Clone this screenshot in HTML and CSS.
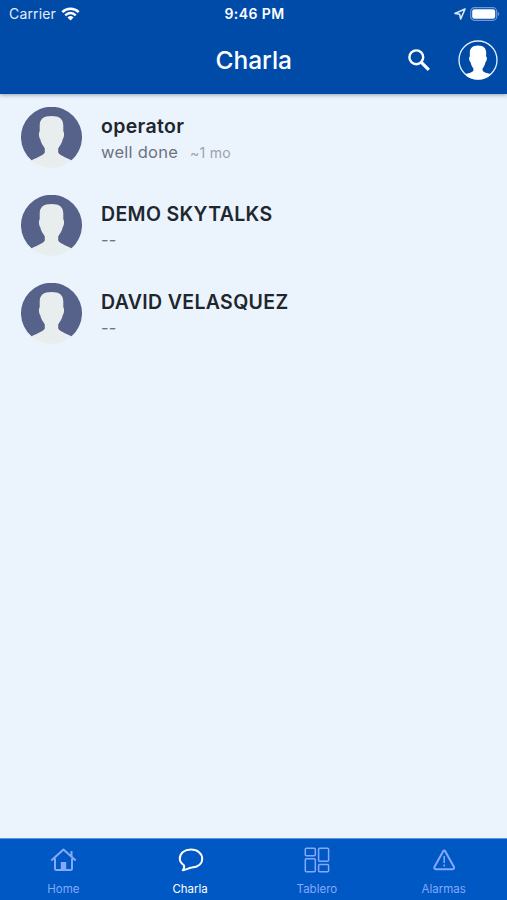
FILE: index.html
```html
<!DOCTYPE html>
<html lang="es">
<head>
    <meta charset="UTF-8" />
    <meta name="viewport" content="width=device-width, initial-scale=1.0" />
    <title>Charla</title>
    <link rel="stylesheet" href="styles.css">
</head>
<body>
<!-- Shared avatar -->
<svg class="symbols" aria-hidden="true">
    <symbol id="avatar" viewBox="0 0 61 61">
        <path class="avatar-bg" d="M10.5 53.3A30.5 30.5 0 1 1 50.5 53.3Z" />
        <path class="avatar-person" d="M30.5 9C38.5 9 42.3 12 42.3 18.5V24.5C43.5 25 43.2 30.5 41.8 32C41 36.5 38.5 39 37.2 41.5V45.5C39 48.5 43 49.5 50.5 53.3A30.5 30.5 0 0 1 10.5 53.3C18 49.5 22 48.5 23.8 45.5V41.5C22.5 39 20 36.5 19.2 32C17.8 30.5 17.5 25 18.7 24.5V18.5C18.7 12 22.5 9 30.5 9Z" />
    </symbol>
</svg>

<header>
    <div class="status-bar">
        <div class="carrier">
            <span>Carrier</span>
            <svg width="19" height="14" viewBox="0 0 19 14" fill="none" stroke="#fff" stroke-width="2.5">
                <path d="M1.3 5.2a11.6 11.6 0 0 1 16.4 0M4.3 8.3a7.3 7.3 0 0 1 10.4 0" />
                <path d="M9.5 13.5l-3-3.1a4.3 4.3 0 0 1 6 0z" fill="#fff" stroke="none" />
            </svg>
        </div>
        <time>9:46 PM</time>
        <div class="indicators">
            <svg width="12" height="12" viewBox="0 0 12 12" fill="none" stroke="#dbe8fa" stroke-width="1.6" stroke-linejoin="round">
                <path d="M11 1L1 5.4L5.7 6.3L6.7 11Z" />
            </svg>
            <svg width="30" height="14" viewBox="0 0 30 14">
                <rect x=".7" y=".7" width="26" height="12.6" rx="3.8" fill="none" stroke="#6d9ad5" stroke-width="1.2" />
                <rect x="2.2" y="2.2" width="23" height="9.6" rx="2.2" fill="#fff" />
                <path d="M27.9 4.8a2.5 2.5 0 0 1 0 4.4z" fill="#6d9ad5" />
            </svg>
        </div>
    </div>
    <div class="title-bar">
        <h1>Charla</h1>
        <div class="title-actions">
            <svg width="24" height="24" viewBox="0 0 24 24" fill="none" stroke="#fff">
                <circle cx="9.3" cy="9.3" r="6.9" stroke-width="2.4" />
                <path d="M14.3 14.3L21.8 21.8" stroke-width="3.2" />
            </svg>
            <svg width="40" height="40" viewBox="0 0 40 40">
                <circle cx="20" cy="20" r="19" fill="none" stroke="#e5effc" stroke-width="1.3" />
                <path fill="#fff" d="M20 5.5C25.5 5.5 28.2 8.3 28.2 12.5L28.1 16.5C29.4 17 29 21 27.5 22C27 25 25.8 27 24.6 28.5V30.5C25.5 32.5 29 33 33.2 34.2A19.3 19.3 0 0 1 6.8 34.2C11 33 14.5 32.5 15.4 30.5V28.5C14.2 27 13 25 12.5 22C11 21 10.6 17 11.9 16.5L11.8 12.5C11.8 8.3 14.5 5.5 20 5.5Z" />
            </svg>
        </div>
    </div>
</header>

<main class="chat-list">
    <div class="chat-item">
        <svg class="avatar"><use href="#avatar" /></svg>
        <div class="chat-text">
            <h2 class="chat-name">operator</h2>
            <p class="chat-message">well done <span class="chat-time">~1 mo</span></p>
        </div>
    </div>
    <div class="chat-item">
        <svg class="avatar"><use href="#avatar" /></svg>
        <div class="chat-text">
            <h2 class="chat-name">DEMO SKYTALKS</h2>
            <p class="chat-message">--</p>
        </div>
    </div>
    <div class="chat-item">
        <svg class="avatar"><use href="#avatar" /></svg>
        <div class="chat-text">
            <h2 class="chat-name">DAVID VELASQUEZ</h2>
            <p class="chat-message">--</p>
        </div>
    </div>
</main>

<nav>
    <a class="tab">
        <svg viewBox="0 0 28 28">
            <path d="M2.3 14.5L14.5 3.5L26.7 14.5M6 12.5V22.7Q6 24 7.3 24H21.7Q23 24 23 22.7V12.5M22.5 10V5" />
            <path class="solid" d="M11.8 16h5.4v8h-5.4z" />
        </svg>
        <span>Home</span>
    </a>
    <a class="tab active">
        <svg viewBox="0 0 28 28">
            <path d="M15 3.5C21.5 3.5 26.2 7.5 26.2 12.7C26.2 18 21.5 21 16 21.5C13 21.7 11.8 23.3 6.8 24.3C8.3 22.3 8.7 20.7 7.7 19C5 17.2 3.8 15 3.8 12.5C3.8 7.3 8.5 3.5 15 3.5Z" />
        </svg>
        <span>Charla</span>
    </a>
    <a class="tab thin">
        <svg viewBox="0 0 28 28">
            <rect x="2.3" y="2.3" width="10" height="7.4" rx="1" />
            <rect x="2.3" y="12.8" width="10" height="13" rx="1" />
            <rect x="15.6" y="2.3" width="10" height="13" rx="1" />
            <rect x="15.6" y="18.4" width="10" height="7.4" rx="1" />
        </svg>
        <span>Tablero</span>
    </a>
    <a class="tab">
        <svg viewBox="0 0 28 28">
            <path d="M13.2 5.2Q14.2 3.8 15.2 5.2L24 21Q24.5 23 22.7 23.2H5.7Q3.9 23 4.4 21Z" />
            <path class="mark" d="M14.2 10V17M14.2 18.5V20.5" />
        </svg>
        <span>Alarmas</span>
    </a>
</nav>
</body>
</html>
```

FILE: styles.css
```css
:root {
    --header-color: #004ba8;
    --nav-color: #0058c4;
    --bg-color: #ebf3fd;
    --text-color: #20262d;
    --text-secondary: #6c737d;
    --tab-color: #84a9fb;
}

* {
    box-sizing: border-box;
    margin: 0;
    padding: 0;
}

body {
    height: 900px;
    font-family: Inter, "Liberation Sans", sans-serif;
    background: var(--bg-color);
    color: var(--text-color);
    display: flex;
    flex-direction: column;
    overflow: hidden;
}

.symbols {
    position: absolute;
    width: 0;
    height: 0;
}

header {
    height: 94px;
    flex-shrink: 0;
    background: var(--header-color);
    color: #fff;
    box-shadow: 0 1px 4px rgba(20, 35, 65, 0.4);
}

.status-bar,
.title-bar {
    display: grid;
    grid-template-columns: 1fr auto 1fr;
    align-items: center;
}

.status-bar {
    height: 27px;
    padding: 0 7px 0 9px;
    font-size: 14px;
    line-height: 20px;
}

.carrier {
    display: flex;
    align-items: center;
    gap: 5px;
    color: #e3edfa;
    letter-spacing: 0.15px;
}

.status-bar time {
    font-weight: 600;
    letter-spacing: 0.4px;
}

.indicators {
    display: flex;
    justify-content: flex-end;
    align-items: center;
    gap: 4px;
}

.title-bar {
    height: 65px;
    padding: 0 9.5px 0 10px;
}

h1 {
    grid-column: 2;
    font-size: 24.5px;
    font-weight: 500;
}

.title-actions {
    display: flex;
    justify-content: flex-end;
    align-items: center;
    gap: 27px;
}

.chat-list {
    flex: 1;
}

.chat-item {
    display: flex;
    gap: 19.5px;
    height: 88px;
    padding: 13px 20px 0 20.5px;
}

.avatar {
    width: 61px;
    height: 61px;
}

.avatar-bg {
    fill: #56628a;
}

.avatar-person {
    fill: #e8eeee;
}

.chat-text {
    padding-top: 6px;
}

.chat-name {
    font-size: 19.5px;
    font-weight: 600;
    line-height: 26px;
    letter-spacing: 0.35px;
}

.chat-message {
    font-size: 16.5px;
    line-height: 26px;
    letter-spacing: 0.25px;
    color: var(--text-secondary);
}

.chat-time {
    margin-left: 7px;
    font-size: 14px;
    letter-spacing: 0.3px;
    color: #9ba2ab;
}

nav {
    height: 62px;
    flex-shrink: 0;
    display: grid;
    grid-template-columns: repeat(4, 1fr);
    background: var(--nav-color);
    border-top: 1px solid #5c92d7;
}

.tab {
    display: flex;
    flex-direction: column;
    align-items: center;
    padding-top: 7px;
    color: var(--tab-color);
    font-size: 11.5px;
    line-height: 16px;
}

.tab svg {
    width: 28px;
    height: 28px;
    margin-bottom: 7px;
    fill: none;
    stroke: currentColor;
    stroke-width: 2;
    stroke-linejoin: round;
}

.tab.thin svg,
.tab .mark {
    stroke-width: 1.5;
}

.tab .solid {
    fill: currentColor;
    stroke: none;
}

.tab.active {
    color: #fff;
}
```
